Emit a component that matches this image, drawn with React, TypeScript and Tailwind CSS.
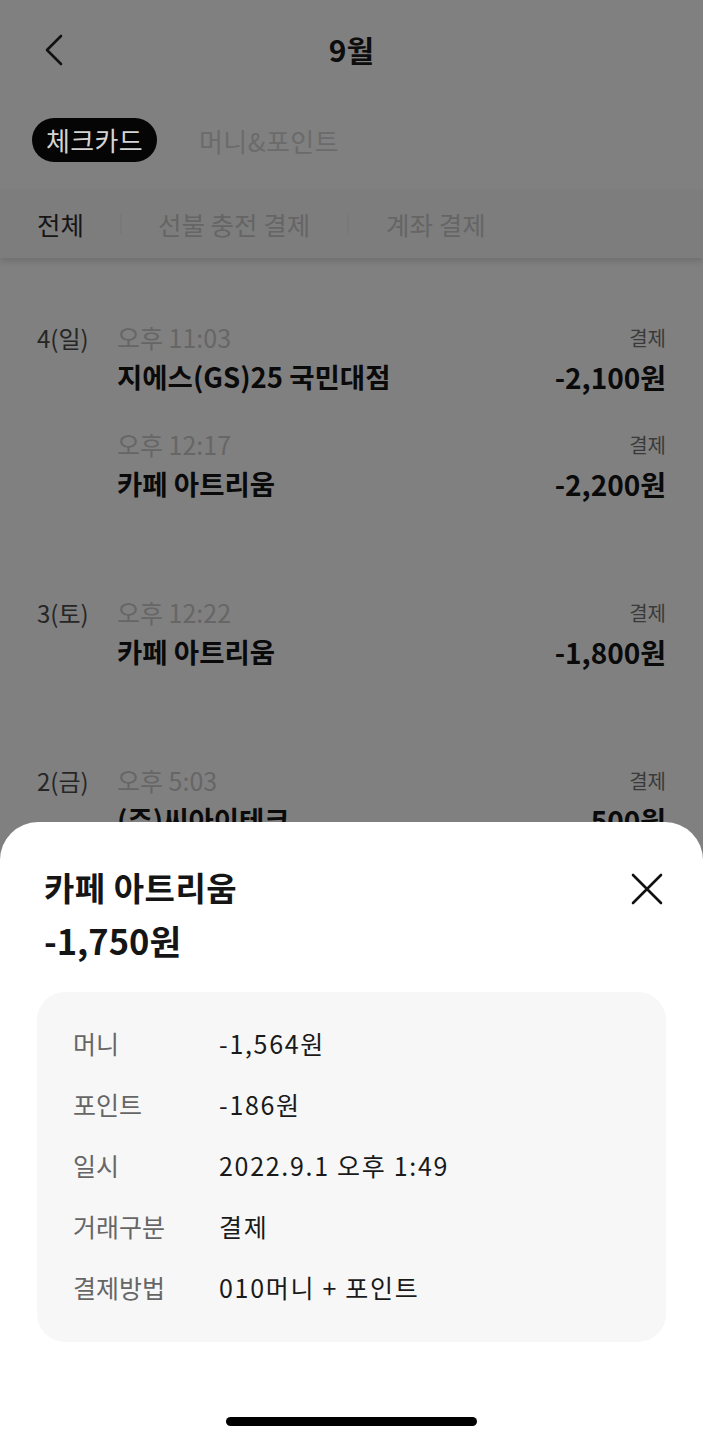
import React from "react";

const font = { fontFamily: '"Noto Sans CJK KR", "Noto Sans", sans-serif' };

type Item = { time: string; name: string; amount: string };
type Group = { date: string; items: Item[] };

const groups: Group[] = [
  {
    date: "4(일)",
    items: [
      { time: "오후 11:03", name: "지에스(GS)25 국민대점", amount: "-2,100원" },
      { time: "오후 12:17", name: "카페 아트리움", amount: "-2,200원" },
    ],
  },
  { date: "3(토)", items: [{ time: "오후 12:22", name: "카페 아트리움", amount: "-1,800원" }] },
  { date: "2(금)", items: [{ time: "오후 5:03", name: "(주)씨아이테크", amount: "-500원" }] },
];

const details = [
  ["머니", "-1,564원"],
  ["포인트", "-186원"],
  ["일시", "2022.9.1 오후 1:49"],
  ["거래구분", "결제"],
  ["결제방법", "010머니 + 포인트"],
];

export default function App() {
  return (
    <div className="relative w-[703px] h-[1440px] overflow-hidden bg-[#808080]" style={font}>
      {/* Header */}
      <div className="relative h-[100px] flex items-center justify-center">
        <svg className="absolute left-[40px] top-[33px]" width="30" height="34" viewBox="0 0 30 34" fill="none">
          <path d="M21 3 L7 17 L21 31" stroke="#111" strokeWidth="2.6" strokeLinecap="round" strokeLinejoin="round" />
        </svg>
        <div className="text-[30px] font-bold text-[#0d0d0d] leading-none -mt-[2px]">9월</div>
      </div>

      {/* Tabs */}
      <div className="flex items-center h-[44px] mt-[18px] pl-[32px] gap-[42px]">
        <div className="h-[44px] px-[14px] rounded-full bg-[#050505] flex items-center text-[26px] text-[#d4d4d4] leading-none tracking-[0.3px]">
          체크카드
        </div>
        <div className="text-[26px] text-[#6b6b6b] tracking-[0.5px]">머니&포인트</div>
      </div>

      {/* Filter */}
      <div className="relative mt-[28px] h-[68px] bg-[#7d7d7d] shadow-[0_4px_6px_rgba(0,0,0,0.12)] flex items-center pl-[37px] text-[25.5px]">
        <span className="text-[#161616]">전체</span>
        <span className="w-[2px] h-[20px] bg-[#777] mx-[36px] opacity-60" />
        <span className="text-[#656565]">선불 충전 결제</span>
        <span className="w-[2px] h-[20px] bg-[#777] mx-[37px] opacity-60" />
        <span className="text-[#656565]">계좌 결제</span>
      </div>

      {/* List */}
      <div className="pt-[65px] px-[37px] flex flex-col gap-[97px]">
        {groups.map((g) => (
          <div key={g.date} className="flex">
            <div className="w-[80px] text-[24px] leading-[30px] text-[#262626]">{g.date}</div>
            <div className="flex-1 flex flex-col gap-[36px]">
              {g.items.map((it) => (
                <div key={it.time} className="flex flex-col gap-[7px]">
                  <div className="flex justify-between items-center h-[30px]">
                    <span className="text-[25px] text-[#666]">{it.time}</span>
                    <span className="text-[20px] text-[#3a3a3a]">결제</span>
                  </div>
                  <div className="flex justify-between items-center h-[34px]">
                    <span className="text-[27.5px] font-bold text-[#0a0a0a]">{it.name}</span>
                    <span className="text-[28px] font-bold text-[#0a0a0a]">{it.amount}</span>
                  </div>
                </div>
              ))}
            </div>
          </div>
        ))}
      </div>

      {/* Bottom sheet */}
      <div className="absolute left-0 right-0 bottom-0 h-[618px] bg-white rounded-t-[38px] px-[37px] pt-[45px]">
        <div className="flex justify-between items-start">
          <div className="pl-[7px]">
            <div className="h-[40px] leading-[40px] text-[33px] font-bold text-[#151515] tracking-[0.5px]">카페 아트리움</div>
            <div className="mt-[13px] h-[40px] leading-[40px] text-[34.5px] font-bold text-[#151515]">-1,750원</div>
          </div>
          <svg className="mt-[5px] mr-[2px]" width="34" height="34" viewBox="0 0 34 34" fill="none">
            <path d="M3 3 L31 31 M31 3 L3 31" stroke="#111" strokeWidth="2.6" strokeLinecap="round" />
          </svg>
        </div>

        <div className="mt-[32px] h-[350px] rounded-[28px] bg-[#f7f7f7] pt-[21px] pl-[36px]">
          {details.map(([k, v]) => (
            <div key={k} className="flex items-center h-[61px] text-[25px]">
              <span className="w-[146px] text-[#666]">{k}</span>
              <span className="text-[#1a1a1a] tracking-[1.7px]">{v}</span>
            </div>
          ))}
        </div>

        <div className="absolute left-[226px] bottom-[14px] w-[251px] h-[9px] rounded-full bg-black" />
      </div>
    </div>
  );
}
